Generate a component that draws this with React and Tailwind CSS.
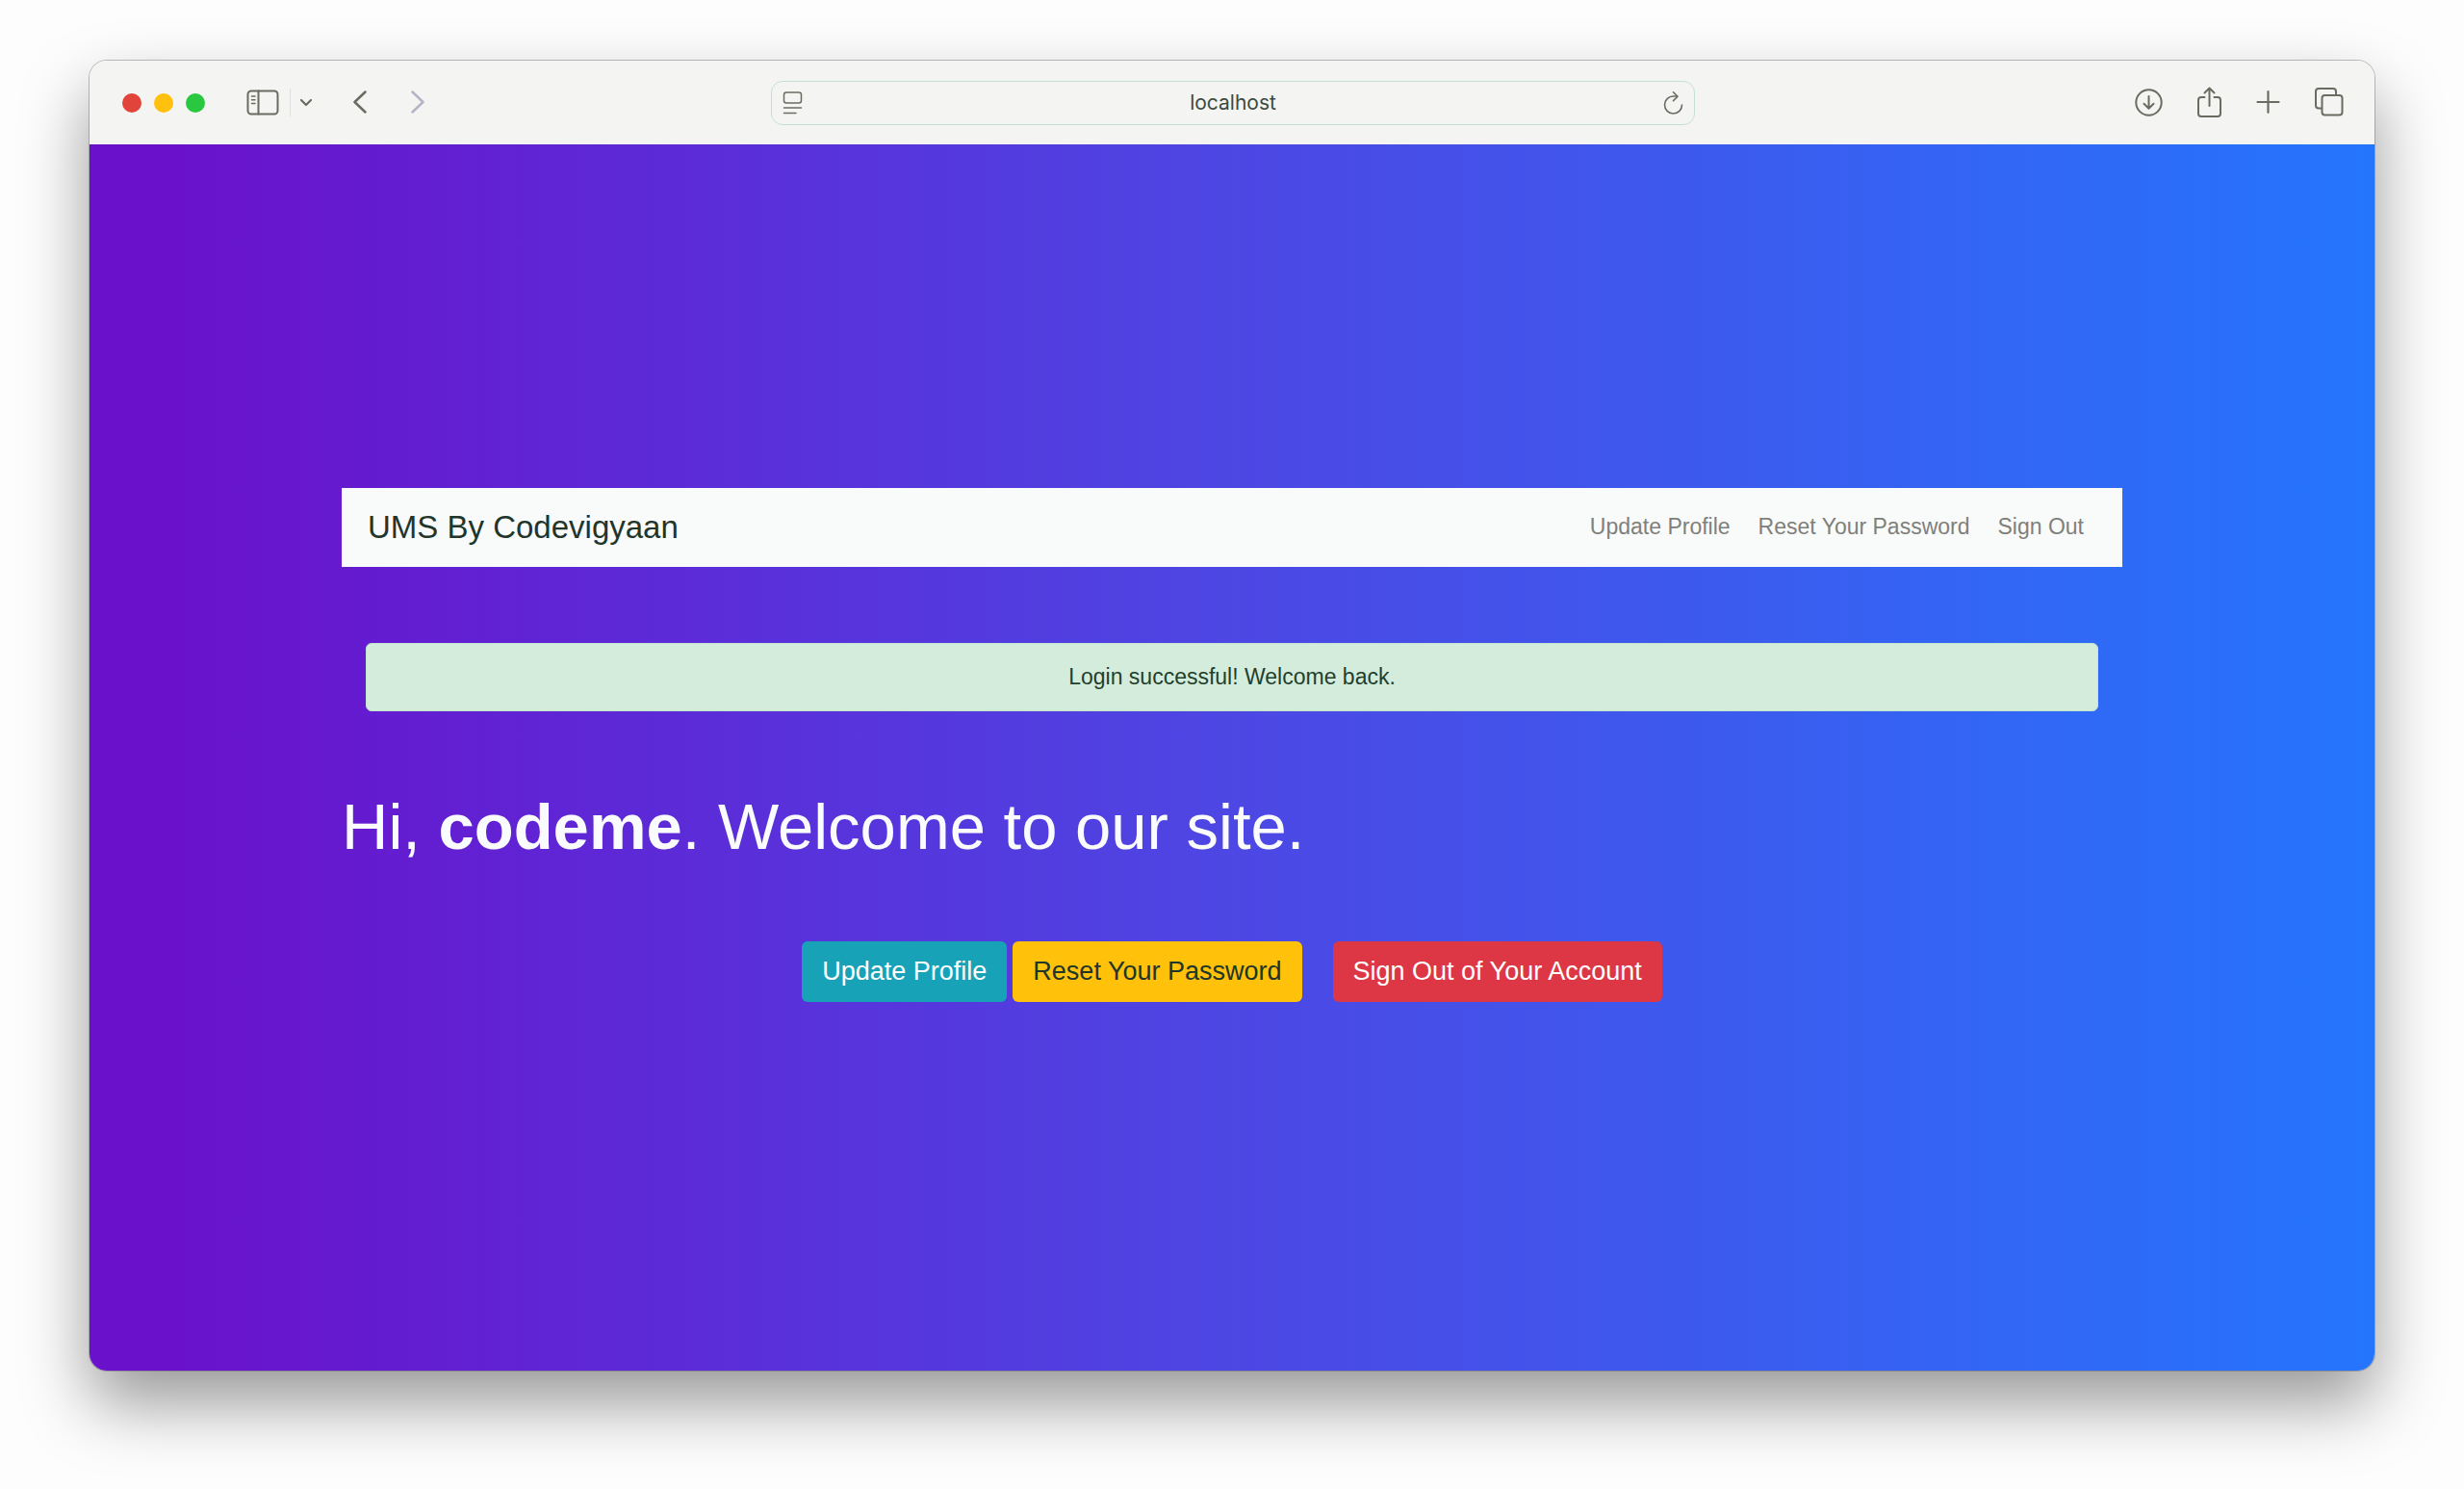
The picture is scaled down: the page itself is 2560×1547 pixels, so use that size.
import React from "react";

const navLinks = ["Update Profile", "Reset Your Password", "Sign Out"];

const TitleBar = () => {
  return (
    <header className="h-[87px] bg-[#f4f4f2] text-[#6b6b62] flex items-center">
      {/* Window controls */}
      <div className="flex-1 flex items-center pl-[34px]">
        <div className="flex gap-[13px]">
          <button aria-label="Close" className="w-5 h-5 rounded-full bg-[#e0443a]" />
          <button aria-label="Minimize" className="w-5 h-5 rounded-full bg-[#ffc10d]" />
          <button aria-label="Zoom" className="w-5 h-5 rounded-full bg-[#2ac840]" />
        </div>

        <button aria-label="Show sidebar" className="ml-[43px]">
          <svg width="34" height="28" viewBox="0 0 34 28" fill="none" stroke="currentColor" strokeWidth="2" strokeLinecap="round">
            <rect x="1.5" y="1.5" width="31" height="24" rx="3.5" />
            <path d="M12.5 1.5v24" />
            <path d="M5.5 7h3.5M5.5 10.8h3.5M5.5 14.6h3.5" strokeWidth="1.5" />
          </svg>
        </button>
        <span className="ml-[11px] w-px h-[29px] bg-[#d9e2dc]" />
        <button aria-label="Tab groups" className="ml-[9px]">
          <svg width="14" height="10" viewBox="0 0 14 10" fill="none" stroke="currentColor" strokeWidth="2.2" strokeLinecap="round" strokeLinejoin="round">
            <path d="M2 2l5 5 5-5" />
          </svg>
        </button>
        <button aria-label="Back" className="ml-[41px]">
          <svg width="16" height="26" viewBox="0 1 16 26" fill="none" stroke="currentColor" strokeWidth="2.5" strokeLinecap="round" strokeLinejoin="round">
            <path d="M13.5 2.5L2.5 13l11 10.5" />
          </svg>
        </button>
        <button aria-label="Forward" className="ml-11 text-[#b5b4c6]">
          <svg width="16" height="26" viewBox="0 1 16 26" fill="none" stroke="currentColor" strokeWidth="2.5" strokeLinecap="round" strokeLinejoin="round">
            <path d="M2.5 2.5L13.5 13l-11 10.5" />
          </svg>
        </button>
      </div>

      {/* Address bar */}
      <div className="w-[960px] h-[46px] px-[10px] rounded-xl border border-[#c4e0d2] flex items-center">
        <button aria-label="Page menu">
          <svg width="24" height="26" viewBox="0 0 24 26" fill="none" stroke="currentColor" strokeWidth="1.5" strokeLinecap="round">
            <rect x="2.5" y="2" width="18" height="11" rx="2.5" />
            <path d="M2.5 18h18M2.5 23.5h12.5" />
          </svg>
        </button>
        <input
          aria-label="Address"
          defaultValue="localhost"
          className="flex-1 min-w-0 bg-transparent text-center text-[21px] text-[#3c4a40] font-[Inter,sans-serif] outline-none"
        />
        <button aria-label="Reload">
          <svg width="24" height="26" viewBox="0 0 24 26" fill="none" stroke="currentColor" strokeWidth="1.6" strokeLinecap="round" strokeLinejoin="round">
            <path d="M21.5 15a9 9 0 1 1-9-9h4" />
            <path d="M12.5 1.8L17 6.2l-4.5 4.4" />
          </svg>
        </button>
      </div>

      {/* Toolbar actions */}
      <div className="flex-1 flex items-center justify-end gap-[35px] pr-8">
        <button aria-label="Downloads">
          <svg width="30" height="30" viewBox="0 1 30 30" fill="none" stroke="currentColor" strokeWidth="2" strokeLinecap="round" strokeLinejoin="round">
            <circle cx="15.5" cy="15.5" r="13.2" />
            <path d="M15.5 9v12.5M10.5 16.7l5 5 5-5" />
          </svg>
        </button>
        <button aria-label="Share">
          <svg width="27" height="34" viewBox="0 1 27 34" fill="none" stroke="currentColor" strokeWidth="2" strokeLinecap="round" strokeLinejoin="round">
            <path d="M8.5 12H5a3 3 0 0 0-3 3v14a3 3 0 0 0 3 3h17a3 3 0 0 0 3-3V15a3 3 0 0 0-3-3h-3.5" />
            <path d="M13.5 21V2.5M8.5 7.5l5-5 5 5" />
          </svg>
        </button>
        <button aria-label="New tab">
          <svg width="25" height="26" viewBox="0 1 25 26" fill="none" stroke="currentColor" strokeWidth="2.2" strokeLinecap="round">
            <path d="M12.5 2.2v21.6M1.5 13h22" />
          </svg>
        </button>
        <button aria-label="Tab overview">
          <svg width="31" height="31" viewBox="0 1 31 31" fill="none" stroke="currentColor" strokeWidth="2" strokeLinejoin="round">
            <rect x="8.5" y="9" width="21" height="20.5" rx="3" />
            <path d="M8.5 22.5H5a3 3 0 0 1-3-3V5a3 3 0 0 1 3-3h15a3 3 0 0 1 3 3v4" />
          </svg>
        </button>
      </div>
    </header>
  );
};

const Navbar = () => {
  return (
    <nav className="h-[82px] bg-[#f9fbfa] pl-[27px] pr-10 flex items-center justify-between">
      <a href="#" className="text-[33px] text-[#22352a]">UMS By Codevigyaan</a>
      <ul className="flex gap-[29px] text-[23px] text-[#80807a]">
        {navLinks.map((link) => (
          <li key={link}>
            <a href="#">{link}</a>
          </li>
        ))}
      </ul>
    </nav>
  );
};

const App = () => {
  const user = { name: "codeme" };

  return (
    <div className="min-h-screen bg-[#fdfdfd] flex pt-[63px] px-[93px] pb-[123px] font-['Liberation_Sans',Arial,sans-serif]">
      <div className="flex-1 flex flex-col rounded-[18px] overflow-hidden shadow-[0_0_0_1px_rgba(90,100,100,0.4),0_34px_70px_rgba(0,0,0,0.4)]">
        <TitleBar />

        <main className="flex-1 flex flex-col justify-center bg-[linear-gradient(90deg,#6a11cb_3%,#4d47e4_50%,#2575fc_100%)]">
          <div className="w-full max-w-[1850px] mx-auto pb-[27px]">
            <Navbar />

            <div role="alert" className="mt-[79px] mx-[25px] py-[17px] rounded-md border border-[#c3e6cb] bg-[#d4ecdb] text-center text-[23px] leading-[35px] text-[#233f2d]">
              Login successful! Welcome back.
            </div>

            <h1 className="mt-20 text-[67px] leading-[79px] text-[#f9fbfc]">
              Hi, <b>{user.name}</b>. Welcome to our site.
            </h1>

            {/* Account actions */}
            <div className="mt-20 flex justify-center text-[27px] leading-[39px] text-white">
              <button className="px-[21px] py-3 rounded-md bg-[#17a2b8]">Update Profile</button>
              <button className="ml-1.5 px-[21px] py-3 rounded-md bg-[#ffc10a] text-[#22352a]">Reset Your Password</button>
              <button className="ml-8 px-[21px] py-3 rounded-md bg-[#dd3746]">Sign Out of Your Account</button>
            </div>
          </div>
        </main>
      </div>
    </div>
  );
};

export default App;
